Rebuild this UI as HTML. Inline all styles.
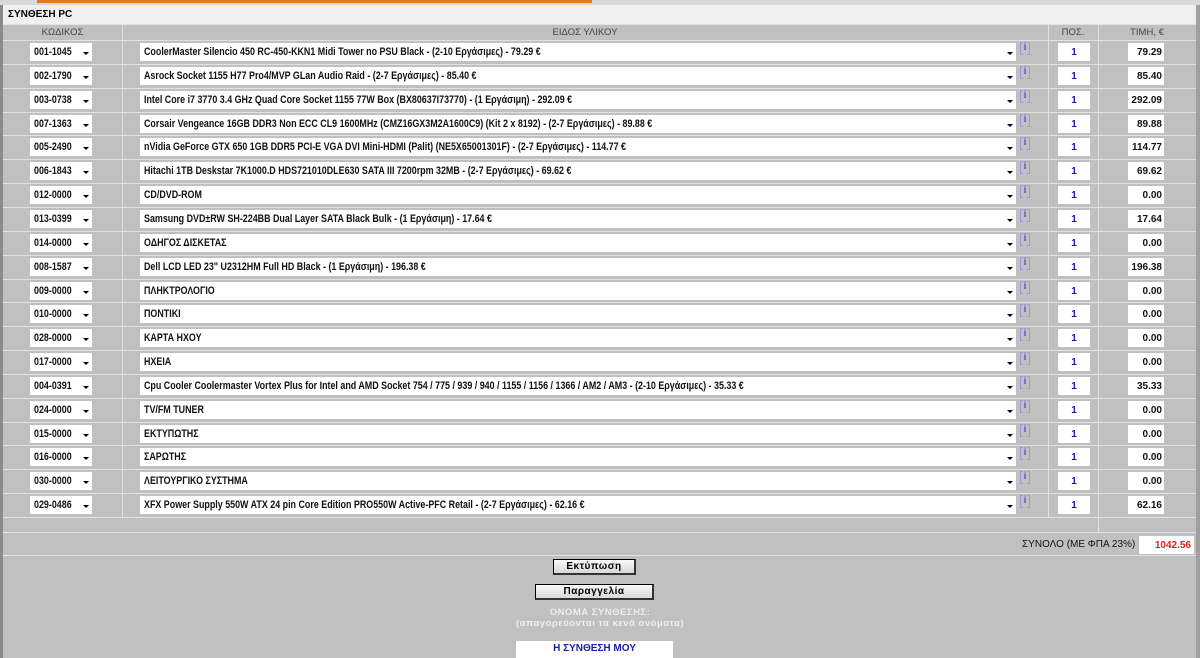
<!DOCTYPE html>
<html><head><meta charset="utf-8"><style>
*{margin:0;padding:0;box-sizing:border-box}
body{width:1200px;height:658px;background:#c0c0c0;font-family:"Liberation Sans",Arial,sans-serif;font-size:10px;position:relative;overflow:hidden}
.a{position:absolute}
.hl{position:absolute;left:3px;width:1193px;height:1px;background:#e2e2e2}
.vl{position:absolute;width:1px;background:#e2e2e2}
.box{position:absolute;background:#fff;height:18px;line-height:19px;font-size:10px;color:#111;white-space:nowrap;overflow:hidden}
.s{display:inline-block;font-weight:bold;font-size:11px;transform:scaleX(.81);transform-origin:left center}
.arr{position:absolute;right:3px;top:9px;width:0;height:0;border-left:3px solid transparent;border-right:3px solid transparent;border-top:3px solid #000}
.info{position:absolute;left:1020px;width:10px;height:12px;color:#55c;font-size:10px;font-weight:bold;text-align:center;line-height:11px}
.info:before{content:"";position:absolute;left:0;top:0;width:2px;height:11px;border:1px solid #99d;border-right:none}
.info:after{content:"";position:absolute;right:0;top:0;width:2px;height:11px;border:1px solid #99d;border-left:none}
.btn{position:absolute;background:linear-gradient(#fafafa,#d8d8d8);border:1px solid #000;border-right:2px solid #333;border-bottom:2px solid #333;font-weight:bold;font-size:10px;text-align:center;line-height:13px;letter-spacing:.5px}
</style></head><body>
<div class="a" style="left:0;top:0;width:1200px;height:5px;background:#d8d8d8"></div>
<div class="a" style="left:37px;top:0;width:555px;height:3px;background:#e07a1c"></div>
<div class="a" style="left:0;top:5px;width:3px;height:653px;background:#8a8a8a"></div>
<div class="a" style="left:1196px;top:5px;width:4px;height:653px;background:#a0a0a0"></div>
<div class="a" style="left:3px;top:5px;width:1193px;height:19px;background:#f0f0f0"></div>
<div class="a" style="left:8px;top:9px;font-weight:bold;font-size:10px">ΣΥΝΘΕΣΗ PC</div>
<div class="hl" style="top:24px"></div>
<div class="a" style="left:3px;top:27px;width:119px;text-align:center;color:#444;font-size:9.5px">ΚΩΔΙΚΟΣ</div>
<div class="a" style="left:122px;top:27px;width:926px;text-align:center;color:#444;font-size:9.5px">ΕΙΔΟΣ ΥΛΙΚΟΥ</div>
<div class="a" style="left:1048px;top:27px;width:50px;text-align:center;color:#444;font-size:9.5px">ΠΟΣ.</div>
<div class="a" style="left:1098px;top:27px;width:98px;text-align:center;color:#444;font-size:9.5px">ΤΙΜΗ, €</div>
<div class="vl" style="left:122px;top:24px;height:493px"></div>
<div class="vl" style="left:1048px;top:24px;height:493px"></div>
<div class="vl" style="left:1098px;top:24px;height:509px"></div>
<div id="rows"></div>
<div class="hl" style="top:532px"></div>
<div class="hl" style="top:555px"></div>
<div class="a" style="left:1022px;top:539px;font-size:10px;color:#111">ΣΥΝΟΛΟ (ΜΕ ΦΠΑ 23%)</div>
<div class="box" style="left:1139px;top:536px;width:55px;text-align:right;padding-right:3px;color:#e02020;font-weight:bold">1042.56</div>
<div class="btn" style="left:553px;top:559px;width:83px;height:16px">Εκτύπωση</div>
<div class="btn" style="left:535px;top:584px;width:119px;height:16px">Παραγγελία</div>
<div class="a" style="left:400px;top:607px;width:400px;text-align:center;color:#eee;font-weight:bold;font-size:9.5px;line-height:11px;letter-spacing:.5px">ΟΝΟΜΑ ΣΥΝΘΕΣΗΣ:<br>(απαγορεύονται τα κενά ονόματα)</div>
<div class="box" style="left:516px;top:641px;width:157px;height:17px;text-align:center;color:#1a1ab0;font-weight:bold;line-height:15px">Η ΣΥΝΘΕΣΗ ΜΟΥ</div>
<script>
var d=[["001-1045","CoolerMaster Silencio 450 RC-450-KKN1 Midi Tower no PSU Black - (2-10 Εργάσιμες) - 79.29 €","79.29"],
["002-1790","Asrock Socket 1155 H77 Pro4/MVP GLan Audio Raid - (2-7 Εργάσιμες) - 85.40 €","85.40"],
["003-0738","Intel Core i7 3770 3.4 GHz Quad Core Socket 1155 77W Box (BX80637I73770) - (1 Εργάσιμη) - 292.09 €","292.09"],
["007-1363","Corsair Vengeance 16GB DDR3 Non ECC CL9 1600MHz (CMZ16GX3M2A1600C9) (Kit 2 x 8192) - (2-7 Εργάσιμες) - 89.88 €","89.88"],
["005-2490","nVidia GeForce GTX 650 1GB DDR5 PCI-E VGA DVI Mini-HDMI (Palit) (NE5X65001301F) - (2-7 Εργάσιμες) - 114.77 €","114.77"],
["006-1843","Hitachi 1TB Deskstar 7K1000.D HDS721010DLE630 SATA III 7200rpm 32MB - (2-7 Εργάσιμες) - 69.62 €","69.62"],
["012-0000","CD/DVD-ROM","0.00"],
["013-0399","Samsung DVD±RW SH-224BB Dual Layer SATA Black Bulk - (1 Εργάσιμη) - 17.64 €","17.64"],
["014-0000","ΟΔΗΓΟΣ ΔΙΣΚΕΤΑΣ","0.00"],
["008-1587","Dell LCD LED 23\" U2312HM Full HD Black - (1 Εργάσιμη) - 196.38 €","196.38"],
["009-0000","ΠΛΗΚΤΡΟΛΟΓΙΟ","0.00"],
["010-0000","ΠΟΝΤΙΚΙ","0.00"],
["028-0000","ΚΑΡΤΑ ΗΧΟΥ","0.00"],
["017-0000","ΗΧΕΙΑ","0.00"],
["004-0391","Cpu Cooler Coolermaster Vortex Plus for Intel and AMD Socket 754 / 775 / 939 / 940 / 1155 / 1156 / 1366 / AM2 / AM3 - (2-10 Εργάσιμες) - 35.33 €","35.33"],
["024-0000","TV/FM TUNER","0.00"],
["015-0000","ΕΚΤΥΠΩΤΗΣ","0.00"],
["016-0000","ΣΑΡΩΤΗΣ","0.00"],
["030-0000","ΛΕΙΤΟΥΡΓΙΚΟ ΣΥΣΤΗΜΑ","0.00"],
["029-0486","XFX Power Supply 550W ATX 24 pin Core Edition PRO550W Active-PFC Retail - (2-7 Εργάσιμες) - 62.16 €","62.16"]];
var h="";
for(var i=0;i<=20;i++){h+='<div class="hl" style="top:'+Math.round(40+i*23.85)+'px"></div>';}
for(var i=0;i<20;i++){var t=Math.round(43+i*23.85);var r=d[i];
h+='<div class="box" style="left:30px;top:'+t+'px;width:62px;padding-left:4px"><span class="s">'+r[0]+'</span><span class="arr"></span></div>';
h+='<div class="box" style="left:140px;top:'+t+'px;width:876px;padding-left:4px"><span class="s">'+r[1]+'</span><span class="arr"></span></div>';
h+='<div class="info" style="top:'+(t-1)+'px">i</div>';
h+='<div class="box" style="left:1058px;top:'+t+'px;width:32px;text-align:center;color:#1a1ab0;font-weight:bold">1</div>';
h+='<div class="box" style="left:1128px;top:'+t+'px;width:36px;text-align:right;padding-right:2px;font-weight:bold">'+r[2]+'</div>';}
document.getElementById("rows").outerHTML=h;
</script>
</body></html>
